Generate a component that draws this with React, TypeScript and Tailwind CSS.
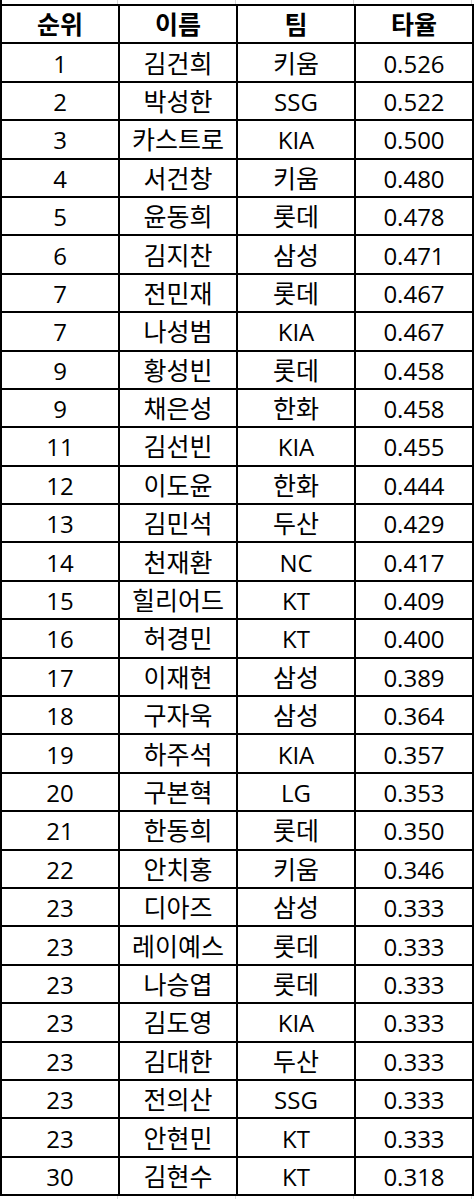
import React from "react";

const rows: [string, string, string, string][] = [
  ["1", "김건희", "키움", "0.526"],
  ["2", "박성한", "SSG", "0.522"],
  ["3", "카스트로", "KIA", "0.500"],
  ["4", "서건창", "키움", "0.480"],
  ["5", "윤동희", "롯데", "0.478"],
  ["6", "김지찬", "삼성", "0.471"],
  ["7", "전민재", "롯데", "0.467"],
  ["7", "나성범", "KIA", "0.467"],
  ["9", "황성빈", "롯데", "0.458"],
  ["9", "채은성", "한화", "0.458"],
  ["11", "김선빈", "KIA", "0.455"],
  ["12", "이도윤", "한화", "0.444"],
  ["13", "김민석", "두산", "0.429"],
  ["14", "천재환", "NC", "0.417"],
  ["15", "힐리어드", "KT", "0.409"],
  ["16", "허경민", "KT", "0.400"],
  ["17", "이재현", "삼성", "0.389"],
  ["18", "구자욱", "삼성", "0.364"],
  ["19", "하주석", "KIA", "0.357"],
  ["20", "구본혁", "LG", "0.353"],
  ["21", "한동희", "롯데", "0.350"],
  ["22", "안치홍", "키움", "0.346"],
  ["23", "디아즈", "삼성", "0.333"],
  ["23", "레이예스", "롯데", "0.333"],
  ["23", "나승엽", "롯데", "0.333"],
  ["23", "김도영", "KIA", "0.333"],
  ["23", "김대한", "두산", "0.333"],
  ["23", "전의산", "SSG", "0.333"],
  ["23", "안현민", "KT", "0.333"],
  ["30", "김현수", "KT", "0.318"],
];

const hasHangul = (s: string) => /[\uac00-\ud7a3]/.test(s);

function Row({ cells, header }: { cells: string[]; header?: boolean }) {
  return (
    <div className="flex h-[38.4px] border-b-2 border-black">
      {cells.map((c, i) => (
        <div
          key={i}
          className={`flex w-[118px] shrink-0 items-center justify-center border-r-2 border-black leading-none ${
            header ? "font-bold" : "font-normal"
          } ${hasHangul(c) ? "text-[25px]" : "text-[24px]"}`}
        >
          <span className={hasHangul(c) ? "pt-[1px]" : "pt-[2px]"}>{c}</span>
        </div>
      ))}
    </div>
  );
}

export default function App() {
  return (
    <div className="min-h-[1199px] w-[475px] bg-white text-black font-['Open_Sans','Noto_Sans_CJK_KR','Noto_Sans',sans-serif]">
      <div className="flex h-[4px] w-[474px]">
        <div className="w-[2px] bg-black" />
        <div className="w-[116px] border-r border-[#d4d4d4]" />
        <div className="w-[118px] border-r border-[#d4d4d4]" />
        <div className="w-[118px] border-r border-[#d4d4d4]" />
        <div className="w-[118px] border-r border-[#d4d4d4]" />
      </div>
      <div className="w-[474px] border-l-2 border-t-2 border-black">
        <Row cells={["순위", "이름", "팀", "타율"]} header />
        {rows.map((r, i) => (
          <Row key={i} cells={r} />
        ))}
      </div>
      <div className="flex h-[3px] w-[474px]">
        <div className="w-[118px] border-r border-[#d4d4d4]" />
        <div className="w-[118px] border-r border-[#d4d4d4]" />
        <div className="w-[118px] border-r border-[#d4d4d4]" />
        <div className="w-[118px] border-r border-[#d4d4d4]" />
      </div>
    </div>
  );
}
